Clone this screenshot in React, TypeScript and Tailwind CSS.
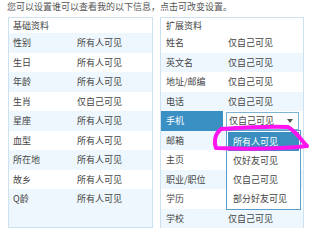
const basic: [string, string][] = [
  ["性别", "所有人可见"],
  ["生日", "所有人可见"],
  ["年龄", "所有人可见"],
  ["生肖", "仅自己可见"],
  ["星座", "所有人可见"],
  ["血型", "所有人可见"],
  ["所在地", "所有人可见"],
  ["故乡", "所有人可见"],
  ["Q龄", "所有人可见"],
];

// rows whose value sits under the open dropdown have none shown
const extended: [string, string][] = [
  ["姓名", "仅自己可见"],
  ["英文名", "仅自己可见"],
  ["地址/邮编", "仅自己可见"],
  ["电话", "仅自己可见"],
  ["手机", ""],
  ["邮箱", ""],
  ["主页", ""],
  ["职业/职位", ""],
  ["学历", ""],
  ["学校", "仅自己可见"],
];

const options = ["所有人可见", "仅好友可见", "仅自己可见", "部分好友可见"];

export default function App() {
  return (
    <div
      className="relative h-[242px] w-[320px] overflow-hidden bg-white text-[9px] text-[#444]"
      style={{ fontFamily: '"Noto Sans CJK SC", "Noto Sans", sans-serif' }}
    >
      <p className="pl-[7px] pt-[2px] leading-[10px] text-[#555]">
        您可以设置谁可以查看我的以下信息，点击可改变设置。
      </p>

      <div className="mt-[5px] flex gap-[7px] pl-[8px]">
        {/* basic info */}
        <div className="h-[211px] w-[145px] border border-[#cde2f1] bg-[#eef7fd]">
          <div className="flex h-[15px] items-center bg-white pl-[4px]">基础资料</div>
          {basic.map(([label, value], i) => (
            <div
              key={label}
              className={`flex h-[19.5px] items-center pl-[4px] ${i % 2 === 1 ? "bg-white" : ""}`}
            >
              <span className="w-[64px]">{label}</span>
              <span>{value}</span>
            </div>
          ))}
        </div>

        {/* extended info */}
        <div className="h-[211px] w-[144px] border border-[#cde2f1] bg-white">
          <div className="flex h-[15px] items-center pl-[5px]">扩展资料</div>
          {extended.map(([label, value], i) =>
            label === "手机" ? (
              <div key={label} className="flex h-[19.5px] items-center">
                <span className="flex h-full w-[62px] items-center bg-[#3a90c3] pl-[5px] text-white">
                  {label}
                </span>
                <div className="ml-[3px] flex h-[18px] w-[73px] items-center justify-between border border-[#7db4d6] bg-white pl-[2px] pr-[5px]">
                  <span>仅自己可见</span>
                  <svg width="6" height="4" viewBox="0 0 6 4">
                    <path d="M0 0 L6 0 L3 4 Z" fill="#555" />
                  </svg>
                </div>
              </div>
            ) : (
              <div
                key={label}
                className={`flex h-[19.5px] items-center pl-[5px] ${i % 2 === 1 ? "bg-[#eef7fd]" : ""}`}
              >
                <span className="w-[62px]">{label}</span>
                {value && <span>{value}</span>}
              </div>
            )
          )}
        </div>
      </div>

      {/* dropdown */}
      <div className="absolute left-[226px] top-[130px] w-[75px] border border-[#5d9fcb] bg-white p-[1px]">
        {options.map((o, i) => (
          <div
            key={o}
            className={`flex h-[19px] items-center pl-[5px] ${i === 0 ? "bg-[#3a8fc0] text-white" : ""}`}
          >
            {o}
          </div>
        ))}
      </div>

      {/* hand drawn highlight */}
      <svg
        className="pointer-events-none absolute left-0 top-0"
        width="320"
        height="242"
        viewBox="0 0 320 242"
      >
        <path
          d="M221 129 C250 127 272 126 288 127 C296 131 301 140 307 146 C280 149 245 149 216 148 C214 143 214 135 221 129"
          fill="none"
          stroke="#ff14f0"
          strokeWidth="4"
          strokeLinecap="round"
          strokeLinejoin="round"
        />
      </svg>
    </div>
  );
}
